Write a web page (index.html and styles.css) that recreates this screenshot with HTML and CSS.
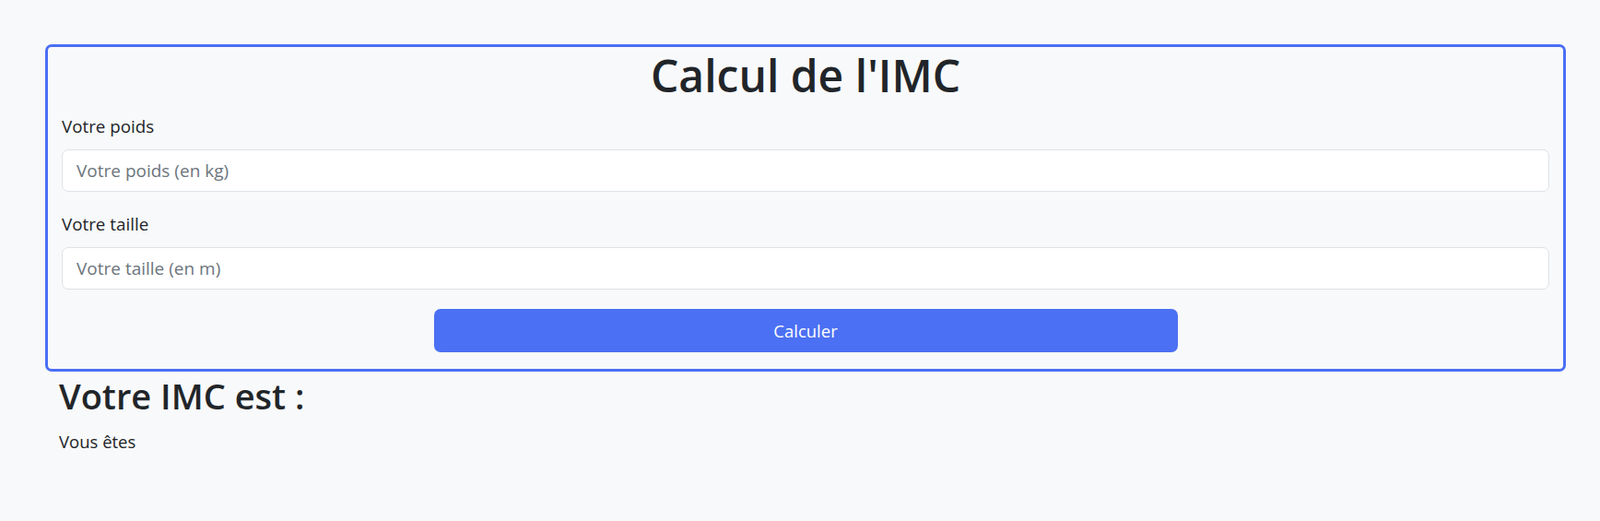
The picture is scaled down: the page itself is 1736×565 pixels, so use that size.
FILE: index.html
```html
<!DOCTYPE html>
<html lang="fr">
<head>
<meta charset="utf-8">
<title>Calcul de l'IMC</title>
<link rel="stylesheet" href="styles.css">
</head>
<body>
  <main class="page">
    <form class="card">
      <h1 class="title">Calcul de l'IMC</h1>
      <div class="field">
        <label class="label" for="poids">Votre poids</label>
        <input class="input" id="poids" type="text" placeholder="Votre poids (en kg)">
      </div>
      <div class="field">
        <label class="label" for="taille">Votre taille</label>
        <input class="input" id="taille" type="text" placeholder="Votre taille (en m)">
      </div>
      <div class="actions">
        <button class="btn" type="button">Calculer</button>
      </div>
    </form>
    <section class="result">
      <h2 class="result-title">Votre IMC est :</h2>
      <p class="result-text">Vous êtes</p>
    </section>
  </main>
</body>
</html>
```

FILE: styles.css
```css
* { box-sizing: border-box; }

html, body {
  margin: 0;
  padding: 0;
  background: #f8f9fa;
  color: #212529;
  font-family: "Open Sans", "Noto Sans", sans-serif;
}

.page {
  padding: 48px 37px 0 49px;
}

.card {
  display: block;
  border: 3px solid #4b6ff4;
  border-radius: 7px;
  padding: 0 15px 18px 15px;
  margin: 0;
}

.title {
  margin: 0 0 10px 0;
  text-align: center;
  font-size: 48px;
  line-height: 62px;
  font-weight: 600;
}

.field {
  margin-bottom: 21px;
}

.label {
  display: block;
  font-size: 18.8px;
  line-height: 28px;
  margin-bottom: 11px;
}

.input {
  display: block;
  width: 100%;
  height: 46px;
  padding: 0 15px;
  border: 1px solid #dee2e6;
  border-radius: 7px;
  background: #fff;
  font-family: inherit;
  font-size: 19px;
  color: #212529;
}

.input::placeholder {
  color: #6c757d;
  opacity: 1;
}

.actions {
  display: flex;
  justify-content: center;
}

.btn {
  width: 807px;
  height: 47px;
  border: 0;
  border-radius: 7px;
  background: #4b70f3;
  color: #fff;
  font-family: inherit;
  font-size: 18.5px;
}

.result {
  padding: 0 15px;
}

.result-title {
  margin: 3px 0 13px 0;
  font-size: 38px;
  line-height: 46px;
  font-weight: 600;
}

.result-text {
  margin: 0;
  font-size: 18.5px;
  line-height: 28px;
}
```
